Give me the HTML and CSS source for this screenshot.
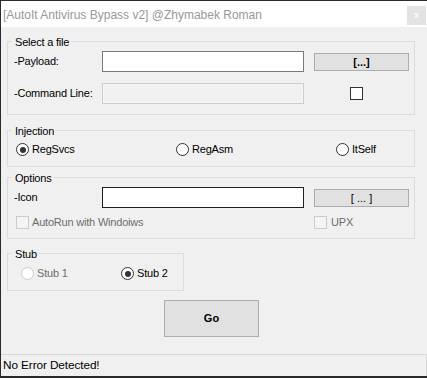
FILE: index.html
```html
<!DOCTYPE html>
<html>
<head>
<meta charset="utf-8">
<link rel="stylesheet" href="styles.css">
</head>
<body>
<div class="window">
  <div class="titlebar">
    <span class="title">[AutoIt Antivirus Bypass v2] @Zhymabek Roman</span>
    <span class="close">x</span>
  </div>
  <div class="content">
    <div class="group g-file">
      <span class="legend">Select a file</span>
      <div class="row">
        <span class="label">-Payload:</span>
        <span class="input"></span>
        <span class="btn bold">[...]</span>
      </div>
      <div class="row row2">
        <span class="label">-Command Line:</span>
        <span class="input disabled"></span>
        <span class="check cmd-check"></span>
      </div>
    </div>

    <div class="group g-inj">
      <span class="legend">Injection</span>
      <div class="radios">
        <span class="opt"><span class="radio on"></span>RegSvcs</span>
        <span class="opt"><span class="radio"></span>RegAsm</span>
        <span class="opt"><span class="radio"></span>ItSelf</span>
      </div>
    </div>

    <div class="group g-opt">
      <span class="legend">Options</span>
      <div class="row">
        <span class="label">-Icon</span>
        <span class="input focus"></span>
        <span class="btn">[ ... ]</span>
      </div>
      <div class="checks">
        <span class="opt off autorun"><span class="check dis"></span>AutoRun with Windoiws</span>
        <span class="opt off upx"><span class="check dis"></span>UPX</span>
      </div>
    </div>

    <div class="group g-stub">
      <span class="legend">Stub</span>
      <div class="stubs">
        <span class="opt off"><span class="radio dis"></span>Stub 1</span>
        <span class="opt"><span class="radio on"></span>Stub 2</span>
      </div>
    </div>

    <div class="go">Go</div>
  </div>
  <div class="status">No Error Detected!</div>
</div>
</body>
</html>
```

FILE: styles.css
```css
html, body {
  margin: 0;
  padding: 0;
  background: #1e1e1e;
}

.window {
  width: 427px;
  height: 378px;
  box-sizing: border-box;
  border-top: 1px solid #2a2a2a;
  border-left: 1px solid #2a2a2a;
  border-bottom: 2px solid #2a2a2a;
  background: #f0f0f0;
  display: flex;
  flex-direction: column;
  font-family: "Liberation Sans", Arial, sans-serif;
  font-size: 11px;
  letter-spacing: -0.2px;
  color: #000;
}

.titlebar {
  height: 26px;
  background: #ffffff;
  display: flex;
  align-items: center;
  justify-content: space-between;
  position: relative;
}

.title {
  font-family: "Liberation Sans", Arial, sans-serif;
  font-size: 12px;
  letter-spacing: 0;
  color: #999999;
  padding-left: 2px;
  line-height: 16px;
  margin-top: 1px;
}

.close {
  width: 19px;
  height: 19px;
  margin-top: 3px;
  background: #e3e3e3;
  color: #fbfbfb;
  font-family: "Liberation Sans", sans-serif;
  font-size: 9px;
  font-weight: bold;
  line-height: 18px;
  text-align: center;
  margin-right: 1px;
}

.content {
  flex: 1;
  padding: 14px 0 0 6px;
  display: flex;
  flex-direction: column;
  align-items: flex-start;
}

.group {
  position: relative;
  border: 1px solid #dcdcdc;
  box-sizing: border-box;
}

.legend {
  position: absolute;
  top: -6px;
  left: 4px;
  line-height: 13px;
  padding: 0 2px 0 3px;
  background: #f0f0f0;
  white-space: nowrap;
}

.g-file {
  width: 408px;
  padding: 9px 0 10px 6px;
}

.row {
  display: flex;
  align-items: center;
  height: 21px;
}

.row2 {
  margin-top: 11px;
}

.label {
  width: 88px;
  flex: none;
  line-height: 13px;
}

.input {
  width: 202px;
  height: 21px;
  box-sizing: border-box;
  border: 1px solid #7a7a7a;
  background: #ffffff;
  flex: none;
}

.input.disabled {
  border: 1px solid #cccccc;
  background: #f0f0f0;
  box-shadow: inset 0 0 0 1px #f7f7f7;
}

.input.focus {
  border-color: #1f1f1f;
}

.btn {
  width: 95px;
  height: 18px;
  box-sizing: border-box;
  margin-left: 10px;
  border: 1px solid #adadad;
  background: #e1e1e1;
  text-align: center;
  line-height: 16px;
  flex: none;
  letter-spacing: 0;
}

.bold {
  font-weight: bold;
}

.check {
  display: inline-block;
  width: 13px;
  height: 13px;
  box-sizing: border-box;
  border: 1px solid #333333;
  background: #ffffff;
  flex: none;
}

.check.dis {
  border-color: #cccccc;
  background: #f4f4f4;
}

.cmd-check {
  margin-left: 46px;
}

.g-inj {
  width: 408px;
  margin-top: 15px;
  padding: 12px 0 10px 8px;
}

.radios {
  display: grid;
  grid-template-columns: 160px 160px auto;
  height: 13px;
}

.opt {
  display: flex;
  align-items: center;
  height: 13px;
  line-height: 13px;
  gap: 3px;
  white-space: nowrap;
}

.opt.off {
  color: #6d6d6d;
}

.radio {
  width: 13px;
  height: 13px;
  box-sizing: border-box;
  border: 1px solid #333333;
  border-radius: 50%;
  background: #ffffff;
  flex: none;
  position: relative;
}

.radio.on::after {
  content: "";
  position: absolute;
  left: 2.5px;
  top: 2.5px;
  width: 6px;
  height: 6px;
  border-radius: 50%;
  background: #333333;
}

.radio.dis {
  border-color: #cccccc;
}

.g-opt {
  width: 408px;
  margin-top: 10px;
  padding: 9px 0 9px 6px;
}

.checks {
  display: flex;
  margin-top: 8px;
  height: 13px;
  padding-left: 2px;
}

.autorun {
  width: 298px;
}

.upx {
  gap: 4px;
}

.g-stub {
  width: 177px;
  margin-top: 14px;
  padding: 13px 0 10px 13px;
}

.stubs {
  display: grid;
  grid-template-columns: 100px auto;
}

.go {
  margin-top: 9px;
  margin-left: 157px;
  width: 95px;
  height: 37px;
  box-sizing: border-box;
  border: 1px solid #adadad;
  background: #e1e1e1;
  font-weight: bold;
  text-align: center;
  line-height: 35px;
  letter-spacing: 0;
}

.status {
  height: 22px;
  box-sizing: border-box;
  border-top: 1px solid #d7d7d7;
  border-right: 1px solid #d7d7d7;
  padding-left: 2px;
  font-size: 11.8px;
  line-height: 21px;
  letter-spacing: -0.1px;
}
```
